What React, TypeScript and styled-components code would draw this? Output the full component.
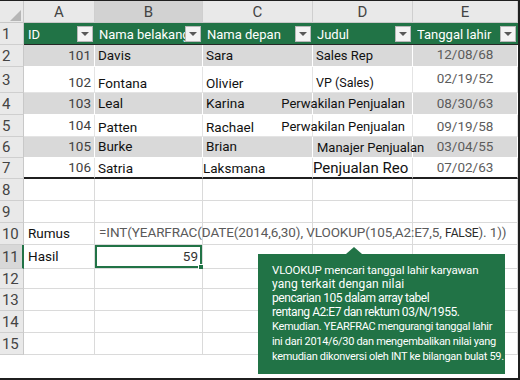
import React from "react";
import styled, { createGlobalStyle } from "styled-components";

const GlobalStyle = createGlobalStyle`
  html, body {
    margin: 0;
    padding: 0;
    background: #ffffff;
  }
  body {
    font-family: Roboto, "Noto Sans", Arial, sans-serif;
  }
`;

const COLS = [24, 71, 108, 110, 100, 105];
const ROWS = [22, 22, 22, 26, 22, 22, 21, 21, 22, 22, 22, 24, 20, 22, 22, 22];
const GREEN = "#217346";

type Align = "l" | "r" | "c";

interface CellSpec {
  t?: React.ReactNode;
  al?: Align;
  c?: string;
  fs?: number;
  pb?: number;
  pl?: number;
  pr?: number;
  z?: boolean;
}

const Frame = styled.div`
  position: relative;
  width: 520px;
  height: 380px;
  box-sizing: border-box;
  border-top: 1px solid #1f1f1f;
  border-right: 2px solid #1f1f1f;
  border-bottom: 2px solid #1f1f1f;
  background: #fff;
  overflow: hidden;
`;

const Sheet = styled.div`
  display: grid;
  grid-template-columns: ${COLS.map((c) => c + "px").join(" ")};
  grid-template-rows: ${ROWS.map((r) => r + "px").join(" ")};
`;

const Corner = styled.div`
  background: #e9e9e9;
  border-right: 1px solid #c8c8c8;
  border-bottom: 1px solid #c8c8c8;
  box-sizing: border-box;
  svg {
    display: block;
  }
`;

const ColHead = styled.div<{ $active?: boolean }>`
  display: flex;
  align-items: center;
  justify-content: center;
  box-sizing: border-box;
  background: ${(p) => (p.$active ? "#d2d2d2" : "#e9e9e9")};
  border-right: 1px solid #cfcfcf;
  border-bottom: 1px solid #c8c8c8;
  color: #444;
  font-size: 15px;
  padding-top: 1px;
`;

const RowHead = styled.div<{ $active?: boolean }>`
  display: flex;
  align-items: center;
  box-sizing: border-box;
  padding-left: 2px;
  background: ${(p) => (p.$active ? "#d8d8d8" : "#e9e9e9")};
  border-right: ${(p) => (p.$active ? `2px solid ${GREEN}` : "1px solid #c8c8c8")};
  border-bottom: 1px solid #cfcfcf;
  color: #444;
  font-size: 15px;
  letter-spacing: -0.3px;
`;

const HeadCell = styled.div`
  display: flex;
  align-items: center;
  box-sizing: border-box;
  min-width: 0;
  background: ${GREEN};
  border-bottom: 1px solid #262626;
  padding: 0 2px 0 4px;
  color: #fff;
  font-size: 13px;
`;

const HeadText = styled.span`
  flex: 1;
  min-width: 0;
  overflow: hidden;
  white-space: nowrap;
  padding-top: 1px;
`;

const FilterBtn = styled.div`
  flex-shrink: 0;
  width: 16px;
  height: 16px;
  box-sizing: border-box;
  background: #f4f4f4;
  border: 1px solid #b9b9b9;
  display: flex;
  align-items: center;
  justify-content: center;
  &::after {
    content: "";
    width: 0;
    height: 0;
    border-left: 4px solid transparent;
    border-right: 4px solid transparent;
    border-top: 4px solid #595959;
  }
`;

const Cell = styled.div<{
  $bg: string;
  $line: string;
  $al: Align;
  $c: string;
  $fs: number;
  $pb: number;
  $pl: number;
  $pr: number;
  $z?: boolean;
  $thick?: boolean;
  $sel?: boolean;
}>`
  position: relative;
  display: flex;
  align-items: flex-end;
  justify-content: ${(p) => (p.$al === "r" ? "flex-end" : p.$al === "c" ? "center" : "flex-start")};
  box-sizing: border-box;
  min-width: 0;
  background: ${(p) => p.$bg};
  border-right: 1px solid ${(p) => p.$line};
  border-bottom: ${(p) => (p.$thick ? "2px solid #1f1f1f" : `1px solid ${p.$line}`)};
  padding: 0 ${(p) => p.$pr}px ${(p) => p.$pb}px ${(p) => p.$pl}px;
  color: ${(p) => p.$c};
  font-size: ${(p) => p.$fs}px;
  line-height: 17px;
  white-space: nowrap;
  z-index: ${(p) => (p.$z ? 2 : "auto")};
  box-shadow: ${(p) => (p.$sel ? `inset 0 0 0 2px ${GREEN}` : "none")};
  &::after {
    content: "";
    display: ${(p) => (p.$sel ? "block" : "none")};
    position: absolute;
    right: -3px;
    bottom: -3px;
    width: 5px;
    height: 5px;
    background: ${GREEN};
    border: 1px solid #fff;
  }
`;

const Formula = styled.span`
  color: #5a5a5a;
  font-size: 13.5px;
  letter-spacing: -0.1px;
`;

const FormulaFalse = styled.span`
  color: #2a2a2a;
  font-size: 12px;
`;

const Callout = styled.div`
  position: absolute;
  left: 258px;
  top: 253px;
  width: 247px;
  height: 120px;
  box-sizing: border-box;
  background: ${GREEN};
  color: #fff;
  padding: 9px 0 0 14px;
  z-index: 10;
  &::before {
    content: "";
    position: absolute;
    left: 88px;
    top: -7px;
    border-left: 8px solid transparent;
    border-right: 8px solid transparent;
    border-bottom: 7px solid ${GREEN};
  }
`;

const CalloutLine = styled.div<{ $fs: number; $h: number; $ls: number }>`
  font-size: ${(p) => p.$fs}px;
  line-height: ${(p) => p.$h}px;
  height: ${(p) => p.$h}px;
  letter-spacing: ${(p) => p.$ls}px;
  white-space: nowrap;
`;

const headers = ["ID", "Nama belakang", "Nama depan", "Judul", "Tanggal lahir"];

const num = (t: string, pb = 2): CellSpec => ({ t, al: "r", c: "#404040", pb, pr: 3 });
const txt = (t: string, pb = 2, fs = 13.5): CellSpec => ({ t, pb, fs });
const date = (t: string, pb = 2): CellSpec => ({ t, al: "c", c: "#5c5c5c", pb });

const tableRows: CellSpec[][] = [
  [num("101"), txt("Davis"), txt("Sara"), txt("Sales Rep", 2, 13), date("12/08/68", 3)],
  [num("102", 1), txt("Fontana", 0), txt("Olivier", 0), { t: "VP (Sales)", fs: 12.5, pb: 1 }, date("02/19/52", 5)],
  [num("103"), txt("Leal"), txt("Karina"), { t: "Perwakilan Penjualan", al: "r", pr: 7, pb: 2, fs: 13 }, date("08/30/63")],
  [num("104"), txt("Patten", 0), txt("Rachael", 0), { t: "Perwakilan Penjualan", al: "r", pr: 7, pb: 1, fs: 13 }, date("09/19/58", 1)],
  [num("105"), txt("Burke"), txt("Brian"), { t: "Manajer Penjualan", pb: 1, pl: 4, z: true, fs: 13 }, date("03/04/55")],
  [num("106", 1), txt("Satria", 0), txt("Laksmana", -1), { t: "Penjualan Reo", fs: 15, pb: -1, pl: 4 }, date("07/02/63", 1)],
];

const calloutLines: { t: string; fs: number; h: number; ls: number }[] = [
  { t: "VLOOKUP mencari tanggal lahir karyawan", fs: 11.5, h: 14, ls: -0.18 },
  { t: "yang terkait dengan nilai", fs: 12, h: 14, ls: 0.1 },
  { t: "pencarian 105 dalam array tabel", fs: 12, h: 14, ls: -0.45 },
  { t: "rentang A2:E7 dan rektum 03/N/1955.", fs: 12, h: 14, ls: -0.45 },
  { t: "Kemudian. YEARFRAC mengurangi tanggal lahir", fs: 11, h: 15, ls: -0.3 },
  { t: "ini dari 2014/6/30 dan mengembalikan nilai yang", fs: 11, h: 15, ls: -0.32 },
  { t: "kemudian dikonversi oleh INT ke bilangan bulat 59.", fs: 11, h: 15, ls: -0.32 },
];

const renderCell = (spec: CellSpec, key: string, bg: string, line: string, thick?: boolean, sel?: boolean) => (
  <Cell
    key={key}
    $bg={bg}
    $line={line}
    $al={spec.al || "l"}
    $c={spec.c || "#111"}
    $fs={spec.fs || 13.5}
    $pb={spec.pb ?? 2}
    $pl={spec.pl ?? 3}
    $pr={spec.pr ?? 3}
    $z={spec.z}
    $thick={thick}
    $sel={sel}
  >
    {spec.t}
  </Cell>
);

const App = () => {
  const extra: Record<number, CellSpec[]> = {
    10: [
      { t: "Rumus", pl: 4, pb: 2 },
      {
        t: (
          <Formula>
            =INT(YEARFRAC(DATE(2014,6,30), VLOOKUP(105,A2:E7,5, <FormulaFalse>FALSE</FormulaFalse>). 1))
          </Formula>
        ),
        pl: 4,
        pb: 2,
        z: true,
      },
    ],
    11: [
      { t: "Hasil", pl: 4, pb: 3 },
      { t: "59", al: "r", pr: 4, pb: 3, c: "#333" },
    ],
  };

  return (
    <>
      <GlobalStyle />
      <Frame>
        <Sheet>
          <Corner>
            <svg width="24" height="22" viewBox="0 0 24 22">
              <polygon points="21,9 21,20 10,20" fill="#b6b6b6" />
            </svg>
          </Corner>
          {["A", "B", "C", "D", "E"].map((l) => (
            <ColHead key={l} $active={l === "B"}>
              {l}
            </ColHead>
          ))}

          <RowHead>1</RowHead>
          {headers.map((h) => (
            <HeadCell key={h}>
              <HeadText>{h}</HeadText>
              <FilterBtn />
            </HeadCell>
          ))}

          {tableRows.map((row, i) => {
            const banded = i % 2 === 0;
            const bg = banded ? "#d9d9d9" : "#ffffff";
            const line = banded ? "#ffffff" : "#e4e4e4";
            return (
              <React.Fragment key={"r" + i}>
                <RowHead>{i + 2}</RowHead>
                {row.map((spec, j) => renderCell(spec, `c${i}-${j}`, bg, line, i === 5))}
              </React.Fragment>
            );
          })}

          {[8, 9, 10, 11, 12, 13, 14, 15].map((r) => {
            const specs = extra[r] || [];
            return (
              <React.Fragment key={"e" + r}>
                <RowHead $active={r === 11}>{r}</RowHead>
                {[0, 1, 2, 3, 4].map((j) =>
                  renderCell(specs[j] || {}, `e${r}-${j}`, "#ffffff", "#dadada", false, r === 11 && j === 1)
                )}
              </React.Fragment>
            );
          })}
        </Sheet>

        <Callout>
          {calloutLines.map((l) => (
            <CalloutLine key={l.t} $fs={l.fs} $h={l.h} $ls={l.ls}>
              {l.t}
            </CalloutLine>
          ))}
        </Callout>
      </Frame>
    </>
  );
};

export default App;
